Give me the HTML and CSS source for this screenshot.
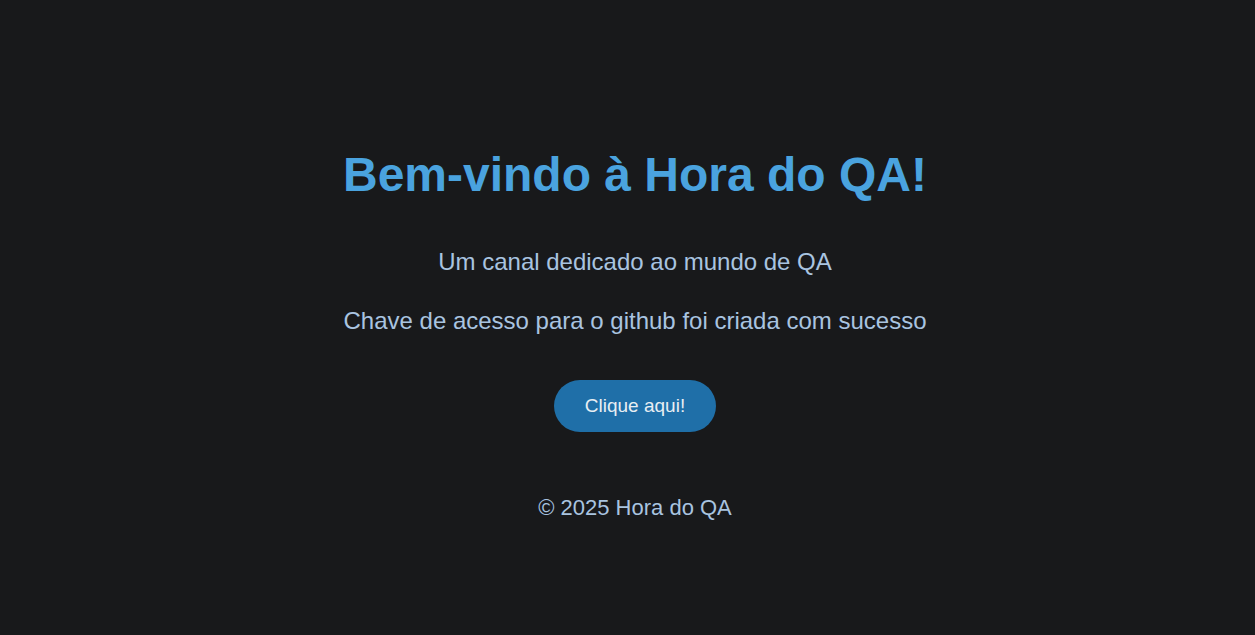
FILE: index.html
```html
<!DOCTYPE html>
<html lang="pt-BR">
<head>
<meta charset="utf-8">
<title>Hora do QA</title>
<link rel="stylesheet" href="styles.css">
</head>
<body>
<main class="page">
  <header class="hero">
    <h1 class="title">Bem-vindo à Hora do QA!</h1>
    <p class="lead">Um canal dedicado ao mundo de QA</p>
    <p class="lead">Chave de acesso para o github foi criada com sucesso</p>
    <button class="cta">Clique aqui!</button>
  </header>
  <footer class="footer">© 2025 Hora do QA</footer>
</main>
</body>
</html>
```
FILE: styles.css
```css
html, body {
  margin: 0;
  padding: 0;
  background: #18191b;
}
body {
  font-family: "Liberation Sans", Arial, sans-serif;
  color: #a9c4e0;
}
.page {
  min-height: 635px;
  display: flex;
  flex-direction: column;
  align-items: center;
  padding-top: 146px;
  padding-left: 15px;
  box-sizing: border-box;
}
.hero {
  display: flex;
  flex-direction: column;
  align-items: center;
  text-align: center;
}
.title {
  margin: 0;
  font-size: 48px;
  font-weight: bold;
  color: #4aa3df;
  line-height: 58px;
}
.lead {
  margin: 0;
  font-size: 24px;
  line-height: 26px;
}
.title + .lead {
  margin-top: 45px;
}
.lead + .lead {
  margin-top: 33px;
}
.cta {
  margin-top: 46px;
  width: 162px;
  height: 52px;
  border: none;
  border-radius: 26px;
  background: #1f6fa8;
  color: #e8eef3;
  font-family: "Liberation Sans", Arial, sans-serif;
  font-size: 19px;
}
.footer {
  margin-top: 64px;
  font-size: 22px;
  line-height: 24px;
}
```
